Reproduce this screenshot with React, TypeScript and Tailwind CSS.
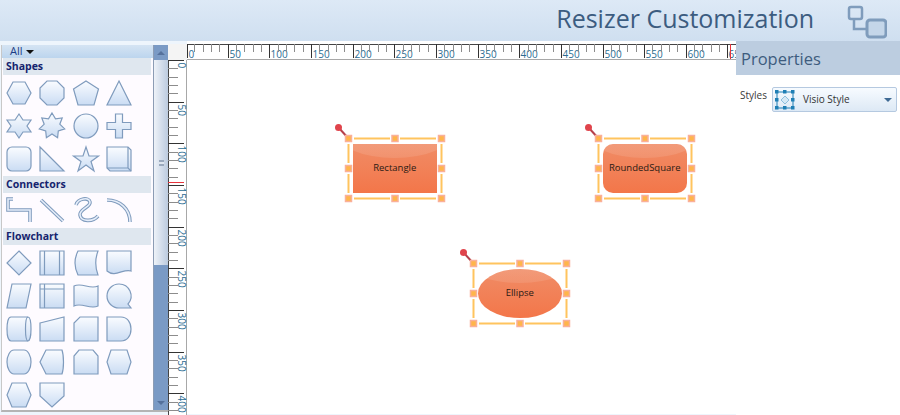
const font = 'font-["Open_Sans","Noto_Sans",sans-serif]';

type Glyph = { d: string; extra?: string; line?: boolean };

function starPath(n: number, outer: number, inner: number) {
  const pts: string[] = [];
  for (let i = 0; i < n * 2; i++) {
    const r = i % 2 === 0 ? outer : inner;
    const a = (Math.PI * i) / n - Math.PI / 2;
    pts.push(`${(13 + r * Math.cos(a)).toFixed(1)} ${(13 + r * Math.sin(a)).toFixed(1)}`);
  }
  return `M${pts.join('L')}Z`;
}

const shapes: Glyph[] = [
  { d: 'M7 2H19L25 13L19 24H7L1 13Z' },
  { d: 'M8 1H18L25 8V18L18 25H8L1 18V8Z' },
  { d: 'M13 1L25.5 9L21 25H5L0.5 9Z' },
  { d: 'M13 1L25 25H1Z' },
  { d: 'M13 1L17 7H25L21 13L25 19H17L13 25L9 19H1L5 13L1 7H9Z' },
  { d: starPath(7, 13, 8) },
  { d: 'M13 1A12 12 0 1 1 13 25A12 12 0 1 1 13 1Z' },
  { d: 'M9.500 1H16.500V9.500H25V16.500H16.500V25H9.500V16.500H1V9.500H9.500Z' },
  { d: 'M6 1H20A5 5 0 0 1 25 6V20A5 5 0 0 1 20 25H6A5 5 0 0 1 1 20V6A5 5 0 0 1 6 1Z' },
  { d: 'M1 1L25 25H1Z' },
  { d: 'M13 1L16 10H25.500L18 15.500L21 25L13 19L5 25L8 15.500L0.500 10H10Z' },
  { d: 'M1 1H22L25 4V25H4L1 22Z', extra: 'M1 22H22V1M22 22L25 25' },
];

const connectors: Glyph[] = [
  { d: 'M7 2H2V13H24V25', line: true },
  { d: 'M2 3L24 24', line: true },
  { d: 'M3 8C5 1 16 0 17 5C18 10 6 12 7 18C8 25 20 25 25 19', line: true },
  { d: 'M1 3C14 3 24 12 24 25', line: true },
];

const flowchart: Glyph[] = [
  { d: 'M13 1L25 13L13 25L1 13Z' },
  { d: 'M1 1H25V25H1Z', extra: 'M5.500 1V25M20.500 1V25' },
  { d: 'M5 1H25C22 9 22 17 25 25H5C1 17 1 9 5 1Z' },
  { d: 'M1 1H25V21C18 18 9 28 1 21Z' },
  { d: 'M6 1H25L20 25H1Z' },
  { d: 'M1 1H25V25H1Z', extra: 'M5.500 1V25M1 6H25' },
  { d: 'M1 3C9 -1 17 7 25 3V23C17 27 9 19 1 23Z' },
  { d: 'M13 1A12 12 0 0 1 22 21L25 25H13A12 12 0 0 1 13 1Z' },
  { d: 'M5 1H22C24 1 25 7 25 13C25 19 24 25 22 25H5C2 25 1 19 1 13C1 7 2 1 5 1Z', extra: 'M22 1C20 1 19.500 7 19.500 13C19.500 19 20 25 22 25' },
  { d: 'M1 7L25 1V25H1Z' },
  { d: 'M7 1H25V25H1V7Z' },
  { d: 'M1 1H15C21 1 25 6 25 13C25 20 21 25 15 25H1Z' },
  { d: 'M8 1H18C22 1 25 7 25 13C25 19 22 25 18 25H8C4 25 1 19 1 13C1 7 4 1 8 1Z' },
  { d: 'M7 1H23C25 7 25 19 23 25H7L1 13Z' },
  { d: 'M6 1H20L25 7V25H1V7Z' },
  { d: 'M5 1H21L25 13L21 25H5L1 13Z' },
  { d: 'M6 1H20L25 13L20 25H6L1 13Z' },
  { d: 'M1 1H25V14L13 25L1 14Z' },
];

function GlyphIcon({ glyph, id }: { glyph: Glyph; id: string }) {
  return (
    <svg width="26" height="26" viewBox="0 0 26 26" fill="none" className="block overflow-visible">
      <defs>
        <linearGradient id={id} x1="0" y1="0" x2="0" y2="1">
          <stop offset="0" stopColor="#fafcff" />
          <stop offset="1" stopColor="#cadcf3" />
        </linearGradient>
      </defs>
      {glyph.line ? (
        <>
          <path d={glyph.d} stroke="#7f9bbd" strokeWidth="3.6" strokeLinejoin="miter" />
          <path d={glyph.d} stroke="#e6eefa" strokeWidth="1.6" strokeLinejoin="miter" />
        </>
      ) : (
        <>
          <path d={glyph.d} fill={`url(#${id})`} stroke="#7f9bbd" strokeWidth="1.2" />
          {glyph.extra && <path d={glyph.extra} stroke="#7f9bbd" strokeWidth="1.2" />}
        </>
      )}
    </svg>
  );
}

function Section({ title, items, prefix, pad }: { title: string; items: Glyph[]; prefix: string; pad: string }) {
  return (
    <div>
      <div className="h-[17px] ml-[1px] w-[148px] bg-[#dfe7ef] flex items-center pl-[3px] text-[10.500px] font-bold text-[#15246e]">
        {title}
      </div>
      <div className={`grid grid-cols-[repeat(4,26px)] gap-x-[7.3px] gap-y-[7px] pl-[4px] ${pad}`}>
        {items.map((g, i) => (
          <GlyphIcon key={i} glyph={g} id={`${prefix}${i}`} />
        ))}
      </div>
    </div>
  );
}

function Palette() {
  return (
    <div className="w-[167px] h-[367px] mt-[4px] ml-[1px] flex border-b-2 border-[#b4b4b4] border-l border-l-[#c8c8c8] bg-[#fefbff]">
      <div className="w-[151px] shrink-0 overflow-hidden">
        <div className="h-[13px] bg-gradient-to-b from-[#d5e4f3] to-[#bcd5ee] flex items-center pl-[8px] text-[11px] text-[#1c3d86] gap-[3px]">
          <span>All</span>
          <span className="w-0 h-0 border-x-[4px] border-x-transparent border-t-[4px] border-t-[#111]" />
        </div>
        <Section title="Shapes" items={shapes} prefix="s" pad="pt-[5px] pb-[4px]" />
        <Section title="Connectors" items={connectors} prefix="c" pad="pt-[4px] pb-[5px]" />
        <Section title="Flowchart" items={flowchart} prefix="f" pad="pt-[5px]" />
      </div>
      <div className="w-[15px] bg-[#7a9ac5] flex flex-col border-l border-l-[#8c9cb4]">
        <div className="h-[15px] flex items-center justify-center">
          <span className="w-0 h-0 border-x-[4px] border-x-transparent border-b-[4px] border-b-[#55719c]" />
        </div>
        <div className="h-[205px] bg-gradient-to-r from-[#eef2f8] to-[#bccbdf] flex items-center justify-center">
          <span className="w-[5px] h-[6px] border-y-2 border-[#9aa9bd] bg-[#dfe6ef]" />
        </div>
        <div className="flex-1" />
        <div className="h-[15px] flex items-center justify-center">
          <span className="w-0 h-0 border-x-[4px] border-x-transparent border-t-[4px] border-t-[#55719c]" />
        </div>
      </div>
    </div>
  );
}

const hTicks = Array.from({ length: 66 }, (_, i) => i);
const vTicks = Array.from({ length: 43 }, (_, i) => i);
const STEP = 8.33;

function HorizontalRuler() {
  return (
    <svg width="549" height="19" className="block bg-white">
      <line x1="0" y1="3.500" x2="549" y2="3.500" stroke="#444" />
      <line x1="0" y1="18.500" x2="549" y2="18.500" stroke="#a8a8a8" />
      {hTicks.map((i) => {
        const x = Math.max(Math.round(i * STEP) - 0.5, 0.5);
        const major = i % 5 === 0;
        return (
          <g key={i}>
            <line x1={x} y1="3" x2={x} y2={major ? 17 : 11} stroke={major ? '#333' : '#8c8c8c'} />
            {major && (
              <text x={x + 1} y="17" fontSize="10" fill="#2b6c92" fontFamily="Open Sans">
                {i * 10}
              </text>
            )}
          </g>
        );
      })}
      <line x1="543.500" y1="3" x2="543.500" y2="18" stroke="#e8343c" />
    </svg>
  );
}

function VerticalRuler() {
  return (
    <svg width="19" height="355" className="block bg-white">
      <line x1="0.500" y1="0" x2="0.500" y2="355" stroke="#444" />
      <line x1="18.500" y1="0" x2="18.500" y2="355" stroke="#a8a8a8" />
      {vTicks.map((i) => {
        const y = Math.round(i * STEP) + 0.5;
        const major = i % 5 === 0;
        return (
          <g key={i}>
            <line x1="0" y1={y} x2={major ? 16 : 10} y2={y} stroke={major ? '#333' : '#8c8c8c'} />
            {major && (
              <text
                transform={`translate(10 ${y + 2}) rotate(90)`}
                fontSize="10"
                fill="#2b6c92"
                fontFamily="Open Sans"
              >
                {i * 10}
              </text>
            )}
          </g>
        );
      })}
      <line x1="0" y1="122.500" x2="16" y2="122.500" stroke="#e8343c" />
    </svg>
  );
}

function Adorner() {
  const handles = [
    [5.500, 5.500],
    [52, 5.500],
    [98.500, 5.500],
    [5.500, 35.500],
    [98.500, 35.500],
    [5.500, 65.500],
    [52, 65.500],
    [98.500, 65.500],
  ];
  return (
    <svg width="106" height="72" className="absolute left-0 top-0 overflow-visible" fill="none">
      <path d="M-4.500 -5.500L5.500 5.500" stroke="#b4404c" strokeWidth="2" />
      <circle cx="-4.500" cy="-5.500" r="3.500" fill="#e0444c" />
      <path
        d="M11 5.500H47M57 5.500H93M11 65.500H47M57 65.500H93M5.500 11V30M5.500 41V60M98.500 11V30M98.500 41V60"
        stroke="#ffc45e"
        strokeWidth="2"
      />
      {handles.map(([x, y], i) => (
        <rect key={i} x={x - 3} y={y - 3} width="6" height="6" fill="#ffb54a" stroke="#f9b09a" strokeWidth="1.500" />
      ))}
    </svg>
  );
}

function ShapeNode({ pos, radius, label }: { pos: string; radius: string; label: string }) {
  return (
    <div className={`absolute w-[106px] h-[72px] ${pos}`}>
      <div
        className={`absolute left-[10.500px] top-[11px] w-[83.500px] h-[49px] overflow-hidden bg-gradient-to-b from-[#f08c66] to-[#f37649] ${radius}`}
      >
        <div className="absolute -left-[20%] -top-[78%] w-[140%] h-[106%] rounded-[50%] bg-gradient-to-b from-white/20 to-white/10" />
        <div className="absolute inset-0 flex items-center justify-center text-[9.500px] text-[#2b1a14]">{label}</div>
      </div>
      <Adorner />
    </div>
  );
}

function Canvas() {
  return (
    <div className="relative flex-1 bg-white">
      <ShapeNode pos="left-[155.500px] top-[73px]" radius="" label="Rectangle" />
      <ShapeNode pos="left-[405.500px] top-[73px]" radius="rounded-[10px]" label="RoundedSquare" />
      <ShapeNode pos="left-[280.500px] top-[198px]" radius="rounded-[50%]" label="Ellipse" />
    </div>
  );
}

function StyleIcon() {
  return (
    <svg width="20" height="20" viewBox="0 0 20 20" fill="none">
      <rect x="2" y="2" width="16" height="16" stroke="#1f7fb5" />
      <path d="M10 6L14 10L10 14L6 10Z" fill="#d5e8f5" stroke="#8dbedd" />
      {[
        [0, 0],
        [8, 0],
        [16, 0],
        [0, 8],
        [16, 8],
        [0, 16],
        [8, 16],
        [16, 16],
      ].map(([x, y], i) => (
        <rect key={i} x={x} y={y} width="3.500" height="3.500" fill="#1f7fb5" />
      ))}
    </svg>
  );
}

function Properties() {
  return (
    <div className="w-[164px] bg-white">
      <div className="h-[34px] bg-[#bccde0] flex items-center pl-[5px] pt-[3px] text-[16.500px] text-[#3e5c7e]">Properties</div>
      <div className="flex pl-[4px] pt-[12px] gap-[5px]">
        <span className="text-[10px] text-[#3a3a3a] leading-[16px]">Styles</span>
        <div className="w-[125px] h-[25px] border border-[#b5c9e0] rounded-[2px] bg-gradient-to-b from-[#f7fbff] to-[#dde9f5] flex items-center pl-[2px]">
          <StyleIcon />
          <span className="ml-[8px] text-[10px] text-[#333]">Visio Style</span>
          <span className="ml-auto mr-[4px] w-0 h-0 border-x-[4px] border-x-transparent border-t-[4px] border-t-[#3f6a94]" />
        </div>
      </div>
    </div>
  );
}

export default function App() {
  return (
    <div className={`w-[900px] h-[415px] overflow-hidden bg-[#eef5fc] flex flex-col ${font}`}>
      <div className="h-[41px] shrink-0 bg-gradient-to-b from-[#dde9f6] to-[#cfdff0] flex items-center justify-end pr-[13px]">
        <span className="text-[25px] text-[#3c5c80] mr-[33px] -mt-[5px] leading-none">Resizer Customization</span>
        <svg width="40" height="34" viewBox="0 0 40 34" fill="none" stroke="#7f9cbc" strokeWidth="2.500" className="mt-[2px]">
          <rect x="2" y="2" width="13" height="12" rx="2" />
          <rect x="20" y="15" width="19" height="17" rx="3" fill="#c4d6e9" strokeWidth="3" />
          <path d="M7 14V24H20" />
        </svg>
      </div>
      <div className="flex-1 flex min-h-0">
        <Palette />
        <div className="w-[568px] flex flex-col mb-[1px]">
          <div className="flex h-[19px] shrink-0">
            <div className="w-[19px] h-[16px] mt-[3px] bg-[#f4f4f4]" />
            <HorizontalRuler />
          </div>
          <div className="flex flex-1 min-h-0">
            <VerticalRuler />
            <Canvas />
          </div>
        </div>
        <Properties />
      </div>
    </div>
  );
}
